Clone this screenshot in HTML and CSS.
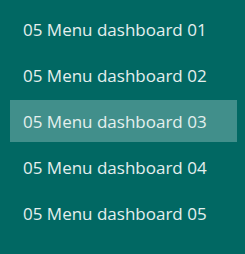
FILE: index.html
```html
<!DOCTYPE html>
<html>
<head>
<meta charset="utf-8">
<link rel="stylesheet" href="styles.css">
</head>
<body>
<ul class="menu">
  <li class="item">05 Menu dashboard 01</li>
  <li class="item">05 Menu dashboard 02</li>
  <li class="item active">05 Menu dashboard 03</li>
  <li class="item">05 Menu dashboard 04</li>
  <li class="item">05 Menu dashboard 05</li>
</ul>
</body>
</html>
```
FILE: styles.css
```css
html, body {
  margin: 0;
  background: #016863;
}
body {
  padding: 8px 8px 0 10px;
  font-family: "Open Sans", sans-serif;
}
.menu {
  list-style: none;
  margin: 0;
  padding: 0;
  width: 227px;
  display: flex;
  flex-direction: column;
  gap: 4px;
}
.item {
  height: 42px;
  display: flex;
  align-items: center;
  padding-left: 13px;
  font-size: 17px;
  color: #e4efee;
}
.active {
  background: #418f8b;
}
```
